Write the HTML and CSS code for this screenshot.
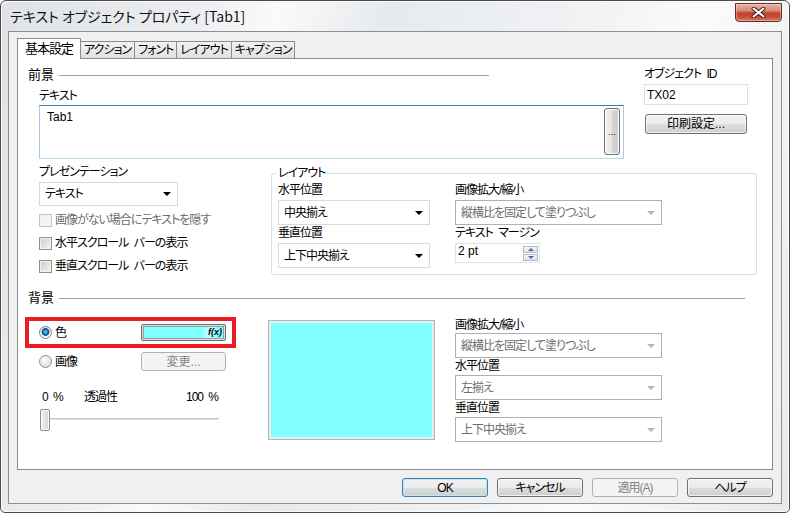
FILE: index.html
```html
<!doctype html>
<html lang="ja">
<head>
    <meta charset="utf-8">
    <title>テキスト オブジェクト プロパティ [Tab1]</title>
    <link rel="stylesheet" href="styles.css">
</head>
<body>
<div class="window">
    <div class="titlebar">
        <span class="title">テキスト オブジェクト プロパティ [Tab1]</span>
        <div class="close-btn">
            <svg width="15" height="11" viewBox="0 0 15 11">
                <path d="M2.5 1.5 L12.5 9.5 M12.5 1.5 L2.5 9.5" stroke="#4a1c15" stroke-width="4" stroke-linecap="round"/>
                <path d="M2.5 1.5 L12.5 9.5 M12.5 1.5 L2.5 9.5" stroke="#fff" stroke-width="2" stroke-linecap="round"/>
            </svg>
        </div>
    </div>

    <div class="client">
        <div class="tabs">
            <div class="tab active">基本設定</div>
            <div class="tab">アクション</div>
            <div class="tab">フォント</div>
            <div class="tab">レイアウト</div>
            <div class="tab">キャプション</div>
        </div>

        <div class="panel">
            <!-- 前景 -->
            <div class="fg">
                <div class="fg-main">
                    <div class="section-head fg-head"><span>前景</span><i class="rule"></i></div>
                    <div class="label indent">テキスト</div>
                    <div class="textbox">
                        <span class="textval latin">Tab1</span>
                        <div class="dots-btn">...</div>
                    </div>
                </div>
                <div class="fg-side">
                    <div class="label id-label">オブジェクト ID</div>
                    <div class="id-input latin">TX02</div>
                    <div class="btn print-btn">印刷設定...</div>
                </div>
            </div>

            <div class="mid">
                <div class="pres">
                    <div class="label">プレゼンテーション</div>
                    <div class="combo pres-combo"><span>テキスト</span></div>
                    <div class="check disabled"><i class="box"></i>画像がない場合にテキストを隠す</div>
                    <div class="check"><i class="box"></i>水平スクロール バーの表示</div>
                    <div class="check"><i class="box"></i>垂直スクロール バーの表示</div>
                </div>

                <fieldset class="layout-box">
                    <legend>レイアウト</legend>
                    <div class="layout-cols">
                        <div class="col-pos">
                            <div class="label">水平位置</div>
                            <div class="combo"><span>中央揃え</span></div>
                            <div class="label">垂直位置</div>
                            <div class="combo"><span>上下中央揃え</span></div>
                        </div>
                        <div class="col-scale">
                            <div class="label">画像拡大/縮小</div>
                            <div class="combo disabled"><span>縦横比を固定して塗りつぶし</span></div>
                            <div class="label">テキスト マージン</div>
                            <div class="spinner">
                                <span class="latin">2 pt</span>
                                <div class="spin"><i class="up"></i><i class="down"></i></div>
                            </div>
                        </div>
                    </div>
                </fieldset>
            </div>

            <!-- 背景 -->
            <div class="section-head bg-head"><span>背景</span><i class="rule"></i></div>
            <div class="bg-body">
                <div class="bg-left">
                    <div class="radio-row marked">
                        <i class="radio on"></i><span class="rlabel">色</span>
                        <div class="color-btn"><div class="color-fill">f(x)</div></div>
                    </div>
                    <div class="radio-row second">
                        <i class="radio"></i><span class="rlabel">画像</span>
                        <div class="btn disabled change-btn">変更...</div>
                    </div>
                    <div class="slider-labels">
                        <span class="zero">0 %</span><span>透過性</span><span class="full">100 %</span>
                    </div>
                    <div class="slider"><i class="thumb"></i></div>
                </div>

                <div class="preview"><div class="swatch"></div></div>

                <div class="bg-right">
                    <div class="label">画像拡大/縮小</div>
                    <div class="combo disabled"><span>縦横比を固定して塗りつぶし</span></div>
                    <div class="label">水平位置</div>
                    <div class="combo disabled gap1"><span>左揃え</span></div>
                    <div class="label">垂直位置</div>
                    <div class="combo disabled gap1"><span>上下中央揃え</span></div>
                </div>
            </div>
        </div>

        <div class="footer">
            <div class="btn default">OK</div>
            <div class="btn">キャンセル</div>
            <div class="btn disabled">適用(A)</div>
            <div class="btn">ヘルプ</div>
        </div>
    </div>
</div>
</body>
</html>
```

FILE: styles.css
```css
* {
    box-sizing: border-box;
}
body {
    margin: 0;
    font-family: "Liberation Sans", "Noto Sans CJK JP", sans-serif;
    font-size: 12px;
    line-height: 16px;
    letter-spacing: -1px; /* MS UI Gothic is narrower than Noto */
    word-spacing: 3px;
    font-feature-settings: "palt";
    color: #000;
    background: #fff;
}
.latin {
    letter-spacing: 0;
    word-spacing: 0;
}

/* окно */
.window {
    width: 790px;
    height: 513px;
    border: 1px solid #4d4d4d;
    border-radius: 6px 6px 5px 5px;
    padding: 0 7px 8px 7px;
    display: flex;
    flex-direction: column;
    background: linear-gradient(105deg, #dfe2e6 0%, #eceef1 22%, #f9fafb 30%, #e7eaed 42%, #f1f3f5 66%, #fbfbfc 76%, #e6e9ec 100%);
    box-shadow: inset 1px 1px 0 #fafafa, inset -1px -1px 0 #fafafa;
}
.titlebar {
    flex: none;
    height: 30px;
    display: flex;
    justify-content: space-between;
    align-items: flex-start;
}
.title {
    font-family: "Noto Sans CJK JP", sans-serif;
    font-size: 14px;
    line-height: 18px;
    letter-spacing: 0;
    word-spacing: 0;
    margin: 6px 0 0 2px;
    color: #111;
}
.close-btn {
    width: 47px;
    height: 19px;
    margin-top: 2px;
    border: 1px solid #6b2b22;
    border-radius: 0 0 4px 4px;
    display: flex;
    align-items: center;
    justify-content: center;
    background: linear-gradient(#e9b0a2 0%, #d98a78 40%, #c1452f 52%, #c34a35 72%, #d67a63 100%);
    box-shadow: inset 0 0 0 1px rgba(255, 255, 255, .35);
}

.client {
    flex: 1;
    border: 1px solid #8e8f8f;
    background: #f0f0f0;
    padding: 6px 8px 0 8px;
    display: flex;
    flex-direction: column;
}

/* вкладки */
.tabs {
    display: flex;
    align-items: flex-end;
    height: 21px;
    margin-bottom: -1px;
    position: relative;
    z-index: 1;
}
.tab {
    height: 17px;
    margin-bottom: 1px;
    margin-left: -1px;
    padding: 0 3px;
    border: 1px solid #898c95;
    border-bottom: none;
    line-height: 16px;
    background: linear-gradient(#f2f2f2, #e1e1e1);
}
.tab.active {
    height: 21px;
    margin-bottom: 0;
    margin-left: 0;
    padding: 2px 7px 0 7px;
    background: #fff;
    font-size: 13px;
}

.panel {
    height: 412px;
    border: 1px solid #898c95;
    background: #fff;
    padding: 8px 0 0 7px;
}

.section-head {
    display: flex;
    align-items: center;
    font-size: 13px;
    letter-spacing: 0;
}
.section-head .rule {
    height: 1px;
    margin-left: 5px;
    background: #a0a0a0;
}
.fg-head .rule {
    width: 430px;
}
.bg-head {
    margin: 15px 0 0 3px;
}
.bg-head .rule {
    flex: 1;
    margin-right: 27px;
}

/* 前景 */
.fg {
    display: flex;
}
.fg-main {
    margin-left: 3px;
    width: 596px;
}
.indent {
    margin: 5px 0 0 11px;
}
.textbox {
    margin: 1px 0 0 11px;
    width: 585px;
    height: 54px;
    border: 1px solid;
    border-color: #3d7bad #a9c9e4 #b7d9ed #a9c9e4;
    background: #fff;
    display: flex;
    justify-content: space-between;
    padding: 2px 3px 2px 7px;
}
.textval {
    margin-top: 1px;
}
.dots-btn {
    width: 16px;
    height: 47px;
    border: 1px solid #707070;
    border-radius: 3px;
    display: flex;
    align-items: center;
    justify-content: center;
    font-size: 9px;
    letter-spacing: 0;
    background: linear-gradient(90deg, #f2f2f2, #e4e4e4 50%, #d5d5d5 51%, #cdcdcd);
    box-shadow: inset 0 0 0 1px #fbfbfb;
}
.fg-side {
    margin-left: 20px;
    width: 104px;
}
.id-label {
    margin-top: -1px;
}
.id-input {
    margin-top: 2px;
    height: 21px;
    border: 1px solid #dde1e6;
    padding: 2px 0 0 2px;
    background: #fff;
}
.print-btn {
    margin: 9px 0 0 1px;
    width: 102px;
    height: 19px;
    letter-spacing: 0;
}

/* кнопки */
.btn {
    height: 20px;
    border: 1px solid #707070;
    border-radius: 3px;
    display: flex;
    align-items: center;
    justify-content: center;
    background: linear-gradient(#f2f2f2 0%, #ebebeb 50%, #dddddd 51%, #cfcfcf 100%);
    box-shadow: inset 0 0 0 1px rgba(255, 255, 255, .7);
}
.btn.default {
    border-color: #3c7fb1;
    box-shadow: inset 0 0 0 1px #bfe6f8;
}
.btn.disabled {
    border-color: #adb2b5;
    background: #f4f4f4;
    color: #838383;
    box-shadow: none;
}

/* комбо */
.combo {
    height: 25px;
    margin-top: 2px;
    border: 1px solid #dadada;
    background: #fff;
    display: flex;
    align-items: center;
    justify-content: space-between;
    padding: 0 6px 0 5px;
}
.combo::after {
    content: "";
    border-left: 4px solid transparent;
    border-right: 4px solid transparent;
    border-top: 4px solid #000;
}
.combo.disabled {
    border-color: #b0b0b0;
    color: #6d6d6d;
}
.combo.disabled::after {
    border-top-color: #b4b4b4;
}

.mid {
    display: flex;
    align-items: flex-start;
    margin-top: 5px;
}
.pres {
    margin-left: 14px;
    width: 232px;
    flex: none;
}
.pres-combo {
    width: 139px;
    height: 24px;
}
.check {
    display: flex;
    align-items: center;
    height: 16px;
    margin-top: 7px;
}
.pres-combo + .check {
    margin-top: 6px;
}
.check .box {
    width: 13px;
    height: 13px;
    margin-right: 3px;
    border: 1px solid #8e8f8f;
    background: linear-gradient(135deg, #c9c9c9, #f7f7f7);
    box-shadow: inset 0 0 0 1px #f3f3f3;
}
.check.disabled {
    color: #6d6d6d;
}
.check.disabled .box {
    border-color: #c4c4c4;
    background: #f4f4f4;
    box-shadow: none;
}

.layout-box {
    margin: 1px 0 0 0;
    width: 486px;
    min-width: 0;
    border: 1px solid #d5dfe5;
    border-radius: 3px;
    padding: 1px 0 6px 6px;
}
.layout-box legend {
    padding: 0 1px;
    margin-left: -1px;
}
.layout-cols {
    display: flex;
    gap: 25px;
}
.col-pos {
    width: 152px;
}
.col-scale {
    width: 207px;
}
.spinner {
    width: 85px;
    height: 20px;
    margin-top: 2px;
    border: 1px solid #e2e2e2;
    display: flex;
    justify-content: space-between;
    padding: 0 1px 0 2px;
    line-height: 14px;
}
.spin {
    display: flex;
    flex-direction: column;
    gap: 1px;
    margin-top: 2px;
}
.spin i {
    width: 15px;
    height: 7px;
    border: 1px solid #b3bac4;
    background: linear-gradient(#f6f8fa, #dbe1e8);
    display: flex;
    align-items: center;
    justify-content: center;
}
.spin .up::after {
    content: "";
    border-left: 3px solid transparent;
    border-right: 3px solid transparent;
    border-bottom: 3px solid #4c6d9c;
}
.spin .down::after {
    content: "";
    border-left: 3px solid transparent;
    border-right: 3px solid transparent;
    border-top: 3px solid #4c6d9c;
}

/* 背景 */
.bg-body {
    display: flex;
    align-items: flex-start;
}
.bg-left {
    flex: none;
    width: 211px;
    margin-top: 11px;
}
.radio-row {
    display: flex;
    align-items: center;
    height: 31px;
    border: 4px solid transparent;
    padding: 0 6px 0 10px;
}
.radio-row.marked {
    border-color: #ed1c24;
}
.radio-row.second {
    margin-top: -2px;
}
.rlabel {
    margin-left: 3px;
}
.radio {
    width: 13px;
    height: 13px;
    border-radius: 50%;
    border: 1px solid #8e8f8f;
    background: radial-gradient(circle at 40% 35%, #ffffff, #d2d2d2);
}
.radio.on {
    border-color: #6b7f91;
    background: radial-gradient(circle at 50% 45%, #8fd8ff 0, #1f7fc8 2px, #0c4a82 3.5px, #e9e9e9 4.2px, #ffffff 6px);
}
.color-btn {
    margin-left: auto;
    width: 85px;
    height: 17px;
    border: 1px solid #6e6e6e;
    border-radius: 2px;
    padding: 1px;
    background: #dedede;
}
.color-fill {
    height: 100%;
    border: 1px solid #9a9a9a;
    background: linear-gradient(100deg, #80ffff 72%, #cbffff 82%, #80ffff 92%);
    text-align: right;
    padding-right: 1px;
    letter-spacing: 0;
    font: italic bold 9px/11px "Liberation Sans", sans-serif;
}
.change-btn {
    margin-left: auto;
    width: 85px;
    height: 19px;
    letter-spacing: 0;
}
.slider-labels {
    display: flex;
    margin-top: 12px;
    padding: 0 18px 0 17px;
}
.slider-labels .zero {
    width: 42px;
}
.slider-labels .full {
    margin-left: auto;
}
.slider {
    margin: 4px 0 0 15px;
    width: 180px;
    height: 22px;
    background:
        linear-gradient(#c4c4c4, #c4c4c4) 3px 9px / 176px 1px no-repeat,
        linear-gradient(#e6e6e6, #e6e6e6) 3px 10px / 176px 1px no-repeat;
}
.slider .thumb {
    display: block;
    width: 10px;
    height: 22px;
    border: 1px solid #8c8c8c;
    border-radius: 2px;
    background: linear-gradient(90deg, #f7f7f7, #e2e2e2 50%, #d4d4d4);
    box-shadow: inset 0 0 0 1px #fbfbfb;
}
.preview {
    margin: 14px 0 0 32px;
    width: 167px;
    height: 120px;
    border: 1px solid #b4b4b4;
    padding: 2px;
    background: #ececec;
}
.swatch {
    height: 100%;
    background: #80ffff;
}
.bg-right {
    margin: 11px 0 0 20px;
    width: 207px;
}
.bg-right .combo {
    margin-top: 0;
}
.bg-right .combo.gap1 {
    margin-top: 1px;
}

.footer {
    display: flex;
    justify-content: flex-end;
    gap: 9px;
    margin-top: 8px;
}
.footer .btn {
    width: 86px;
    height: 19px;
}
```
